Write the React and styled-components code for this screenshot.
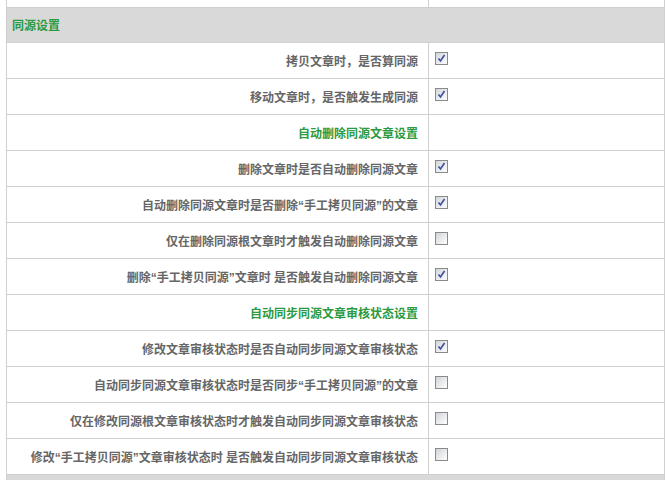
import styled, { createGlobalStyle } from "styled-components";

const GlobalStyle = createGlobalStyle`
  body {
    margin: 0;
    background: #fff;
    font-family: "Liberation Sans", "Noto Sans CJK SC", sans-serif;
  }
`;

// 전체 표
const Wrap = styled.div`
  padding-left: 6px;
  width: 659px;
`;

const Table = styled.table`
  width: 659px;
  border-collapse: collapse;
  table-layout: fixed;
  border-left: 1px solid #d0d0d0;
  border-right: 1px solid #d0d0d0;
`;

const Row = styled.tr`
  height: ${(p) => p.$h || "36px"};
  background: ${(p) => (p.$gray ? "#d9d9d9" : "#fff")};
`;

const TopRow = styled.tr`
  height: 7px;
`;

const Cell = styled.td`
  border-bottom: 1px solid #d0d0d0;
  padding: 0;
  vertical-align: middle;
`;

const LabelCell = styled(Cell)`
  width: 411px;
  border-right: 1px solid #d0d0d0;
  text-align: right;
  padding-right: 10px;
  font-size: 12px;
  font-weight: bold;
  color: ${(p) => (p.$green ? "#2b9a41" : "#666")};
  white-space: nowrap;
`;

const HeadCell = styled(Cell)`
  font-size: 12px;
  font-weight: bold;
  color: #2b9a41;
  padding-left: 5px;
  border-top: 1px solid #d0d0d0;
`;

const BoxCell = styled(Cell)`
  padding-left: 6px;
`;

const Box = styled.span`
  display: block;
  width: 11px;
  height: 11px;
  border: 1px solid #8a8a8a;
  background: linear-gradient(135deg, #d2d5da 0%, #f1f2f4 70%, #fff 100%);
  position: relative;
  top: -2px;
`;

const Check = ({ on }) => (
  <Box>
    {on && (
      <svg width="11" height="11" viewBox="0 0 11 11" style={{ position: "absolute", left: 0, top: 0 }}>
        <path d="M2.5 5.5 L4.5 8 L8.5 2" fill="none" stroke="#3c4f9e" strokeWidth="1.6" />
      </svg>
    )}
  </Box>
);

const rows = [
  { label: "拷贝文章时，是否算同源", on: true },
  { label: "移动文章时，是否触发生成同源", on: true },
  { label: "自动删除同源文章设置", sub: true },
  { label: "删除文章时是否自动删除同源文章", on: true },
  { label: "自动删除同源文章时是否删除“手工拷贝同源”的文章", on: true },
  { label: "仅在删除同源根文章时才触发自动删除同源文章", on: false },
  { label: "删除“手工拷贝同源”文章时 是否触发自动删除同源文章", on: true },
  { label: "自动同步同源文章审核状态设置", sub: true },
  { label: "修改文章审核状态时是否自动同步同源文章审核状态", on: true },
  { label: "自动同步同源文章审核状态时是否同步“手工拷贝同源”的文章", on: false },
  { label: "仅在修改同源根文章审核状态时才触发自动同步同源文章审核状态", on: false },
  { label: "修改“手工拷贝同源”文章审核状态时 是否触发自动同步同源文章审核状态", on: false },
];

const App = () => {
  return (
    <>
      <GlobalStyle />
      <Wrap>
        <Table>
          <tbody>
            <TopRow>
              <LabelCell style={{ borderBottom: 0 }} />
              <Cell style={{ borderBottom: 0 }} />
            </TopRow>
            <Row $gray $h="35px">
              <HeadCell colSpan={2}>同源设置</HeadCell>
            </Row>
            {rows.map((r, i) => (
              <Row key={i}>
                <LabelCell $green={r.sub}>{r.label}</LabelCell>
                <BoxCell>{!r.sub && <Check on={r.on} />}</BoxCell>
              </Row>
            ))}
            <Row $gray $h="6px">
              <HeadCell colSpan={2} style={{ borderBottom: 0 }} />
            </Row>
          </tbody>
        </Table>
      </Wrap>
    </>
  );
};

export default App;
